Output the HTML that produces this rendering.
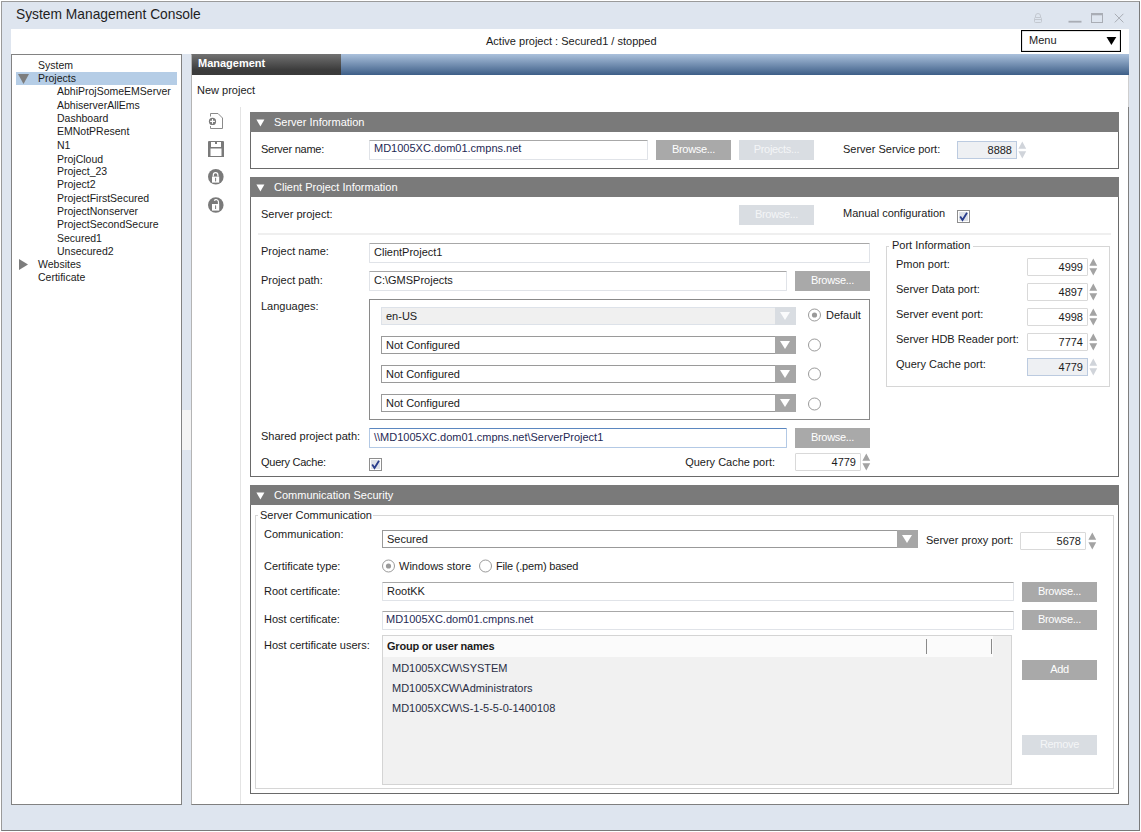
<!DOCTYPE html><html><head><meta charset="utf-8"><style>
html,body{margin:0;padding:0;}
body{width:1141px;height:832px;position:relative;overflow:hidden;background:#fff;font-family:"Liberation Sans", sans-serif;}
body div{position:absolute;box-sizing:border-box;}
.t{white-space:nowrap;line-height:1;}
svg{position:absolute;overflow:visible}
</style></head><body>
<div style="left:1px;top:1px;width:1139px;height:830px;background:#dee5ef;border:1px solid #7a7a7a;border-top-color:#9a9a9a;border-left-color:#9a9a9a;"></div>
<div class="t" style="left:16px;top:7px;font-size:14.6px;color:#1e1e1e;transform:scaleX(0.945);transform-origin:0 0;">System Management Console</div>
<svg style="left:0;top:0" width="1141" height="30">
<g fill="none" stroke="#c3c8d0" stroke-width="1">
<rect x="1034.5" y="17.5" width="7" height="5" rx="1"/>
<path d="M1035.5 17.5 v-1.5 a2.5 2.5 0 0 1 5 0 v1.5"/>
<path d="M1034.5 19.5 h7"/>
</g>
<rect x="1068.5" y="20.8" width="13" height="1.8" fill="#a9adb5"/>
<rect x="1091.5" y="13.5" width="11" height="9" fill="none" stroke="#a9adb5" stroke-width="1"/>
<rect x="1091" y="13" width="12" height="2.3" fill="#a9adb5"/>
<path d="M1114.8 13.8 L1123.4 22.4 M1123.4 13.8 L1114.8 22.4" stroke="#a9adb5" stroke-width="1"/>
</svg>
<div style="left:11px;top:29px;width:1118px;height:25px;background:#fff;"></div>
<div class="t" style="left:486px;top:35.69px;font-size:11px;color:#1b1b1b;font-weight:400;">Active project : Secured1 / stopped</div>
<div style="left:1021px;top:30px;width:100px;height:22px;background:#fff;border:1px solid #000;box-shadow:inset 0 0 0 0.2px #888;"></div>
<div class="t" style="left:1029px;top:34.69px;font-size:11px;color:#1b1b1b;font-weight:400;">Menu</div>
<svg style="left:0;top:0" width="1141" height="60"><path d="M1106.5 37 L1116.3 37 L1111.4 45 Z" fill="#000"/></svg>
<div style="left:11px;top:54px;width:171px;height:751px;background:#fff;border:1px solid #828282;"></div>
<div style="left:16px;top:72px;width:161px;height:13px;background:#b5cde6;"></div>
<div class="t" style="left:38px;top:60px;font-size:10.5px;color:#1b1b1b;">System</div>
<div class="t" style="left:38px;top:73px;font-size:10.5px;color:#1b1b1b;">Projects</div>
<div class="t" style="left:57px;top:86px;font-size:10.5px;color:#1b1b1b;">AbhiProjSomeEMServer</div>
<div class="t" style="left:57px;top:100px;font-size:10.5px;color:#1b1b1b;">AbhiserverAllEms</div>
<div class="t" style="left:57px;top:113px;font-size:10.5px;color:#1b1b1b;">Dashboard</div>
<div class="t" style="left:57px;top:126px;font-size:10.5px;color:#1b1b1b;">EMNotPResent</div>
<div class="t" style="left:57px;top:140px;font-size:10.5px;color:#1b1b1b;">N1</div>
<div class="t" style="left:57px;top:154px;font-size:10.5px;color:#1b1b1b;">ProjCloud</div>
<div class="t" style="left:57px;top:166px;font-size:10.5px;color:#1b1b1b;">Project_23</div>
<div class="t" style="left:57px;top:179px;font-size:10.5px;color:#1b1b1b;">Project2</div>
<div class="t" style="left:57px;top:193px;font-size:10.5px;color:#1b1b1b;">ProjectFirstSecured</div>
<div class="t" style="left:57px;top:206px;font-size:10.5px;color:#1b1b1b;">ProjectNonserver</div>
<div class="t" style="left:57px;top:219px;font-size:10.5px;color:#1b1b1b;">ProjectSecondSecure</div>
<div class="t" style="left:57px;top:233px;font-size:10.5px;color:#1b1b1b;">Secured1</div>
<div class="t" style="left:57px;top:246px;font-size:10.5px;color:#1b1b1b;">Unsecured2</div>
<div class="t" style="left:38px;top:259px;font-size:10.5px;color:#1b1b1b;">Websites</div>
<div class="t" style="left:38px;top:272px;font-size:10.5px;color:#1b1b1b;">Certificate</div>
<svg style="left:0;top:0" width="200" height="300"><path d="M18 74 L29 74 L23.5 84 Z" fill="#7d7d7d"/><path d="M19 259 L28 264.5 L19 270 Z" fill="#7d7d7d"/></svg>
<div style="left:182px;top:410px;width:9px;height:40px;background:#f3f3f3;"></div>
<div style="left:191px;top:54px;width:938px;height:751px;background:#fff;border:1px solid #7f7f7f;border-left-color:#b4b4b4;"></div>
<div style="left:192px;top:54px;width:149px;height:21px;background:linear-gradient(#727272,#3c3c3c 75%,#3a3a3a);"></div>
<div style="left:341px;top:54px;width:788px;height:21px;background:linear-gradient(#abc1dc,#3d5e87);"></div>
<div style="left:1128px;top:75px;width:1px;height:32px;background:#cfcfcf;"></div>
<div class="t" style="left:198px;top:57.69px;font-size:11px;color:#fff;font-weight:700;">Management</div>
<div class="t" style="left:197px;top:85.19px;font-size:11px;color:#1b1b1b;font-weight:400;">New project</div>
<div style="left:240px;top:107px;width:1px;height:697px;background:#e4e4e4;"></div>
<svg style="left:0;top:0" width="260" height="230">
<path d="M210.5 116.5 V113.5 H218 L222.5 118 V128.5 H210.5 V126" fill="none" stroke="#8a8a8a" stroke-width="1"/>
<circle cx="212.5" cy="121.4" r="3.6" fill="#7a7a7a"/>
<path d="M212.5 119 v4.8 M210.1 121.4 h4.8" stroke="#fff" stroke-width="1.1"/>
<path d="M208 142 Q208 141 209 141 H223 Q224 141 224 142 V157 H208 Z M211 142 V147 H221 V142 Z M210.5 148.5 V156 H221.5 V148.5 Z" fill="#7a7a7a" fill-rule="evenodd"/>
<rect x="215" y="142" width="2" height="2" fill="#7a7a7a"/>
<circle cx="215.8" cy="176.8" r="7.8" fill="#7a7a7a"/>
<rect x="212" y="176.6" width="7.2" height="6" fill="#fff"/>
<path d="M213.3 176.6 v-1.6 a2.3 2.3 0 0 1 4.6 0 v1.6" fill="none" stroke="#fff" stroke-width="1.2"/>
<rect x="215.1" y="177.8" width="1" height="3.6" fill="#7a7a7a"/>
<circle cx="215.8" cy="205" r="7.8" fill="#7a7a7a"/>
<rect x="212" y="204" width="7.2" height="6.6" fill="#fff"/>
<path d="M214.2 200.6 a2.4 2.4 0 0 1 4.3 1.6 v1.8" fill="none" stroke="#fff" stroke-width="1.2"/>
<rect x="215.1" y="205.4" width="1" height="3.6" fill="#7a7a7a"/>
</svg>
<div style="left:250px;top:112px;width:869px;height:57px;background:#fff;border:1px solid #6a6a6a;"></div>
<div style="left:250px;top:112px;width:869px;height:20px;background:#7a7a7a;"></div>
<svg style="left:0;top:0" width="300" height="832"><path d="M256.4 119.4 L264.4 119.4 L260.4 126.4 Z" fill="#fff"/></svg>
<div class="t" style="left:274px;top:116.69px;font-size:11px;color:#fff;font-weight:400;">Server Information</div>
<div class="t" style="left:261px;top:143.69px;font-size:11px;color:#1b1b1b;font-weight:400;letter-spacing:-0.25px;">Server name:</div>
<div style="left:369px;top:140px;width:279px;height:20px;background:#fff;border:1px solid #e0e3e8;border-top-color:#a8a8a8;border-radius:1px;"></div>
<div class="t" style="left:374px;top:142.69px;font-size:11px;color:#1f2a55;font-weight:400;">MD1005XC.dom01.cmpns.net</div>
<div style="left:656px;top:140px;width:75px;height:20px;background:#a9a9a9;"></div>
<div class="t" style="left:656px;top:140px;width:75px;height:20px;line-height:19px;text-align:center;font-size:11px;color:#fff;letter-spacing:-0.3px;">Browse...</div>
<div style="left:739px;top:140px;width:75px;height:20px;background:#d9dde2;"></div>
<div class="t" style="left:739px;top:140px;width:75px;height:20px;line-height:19px;text-align:center;font-size:11px;color:#f4f5f7;letter-spacing:-0.3px;">Projects...</div>
<div class="t" style="left:843px;top:143.69px;font-size:11px;color:#1b1b1b;font-weight:400;">Server Service port:</div>
<div style="left:957px;top:141px;width:60px;height:18px;background:#eef0f3;border:1px solid #bccbe0;"></div>
<div class="t" style="right:129px;top:144.69px;font-size:11px;color:#1b1b1b;font-weight:400;">8888</div>
<svg style="left:0;top:0" width="1141" height="832"><path d="M1018.4 148.8 L1026.2 148.8 L1022.3 141.5 Z M1018.4 151.2 L1026.2 151.2 L1022.3 158.5 Z" fill="#d0d4da"/></svg>
<div style="left:250px;top:177px;width:869px;height:300px;background:#fff;border:1px solid #6a6a6a;"></div>
<div style="left:250px;top:177px;width:869px;height:20px;background:#7a7a7a;"></div>
<svg style="left:0;top:0" width="300" height="832"><path d="M256.4 184.4 L264.4 184.4 L260.4 191.4 Z" fill="#fff"/></svg>
<div class="t" style="left:274px;top:181.69px;font-size:11px;color:#fff;font-weight:400;">Client Project Information</div>
<div class="t" style="left:261px;top:208.69px;font-size:11px;color:#1b1b1b;font-weight:400;">Server project:</div>
<div style="left:739px;top:205px;width:75px;height:20px;background:#d9dde2;"></div>
<div class="t" style="left:739px;top:205px;width:75px;height:20px;line-height:19px;text-align:center;font-size:11px;color:#f4f5f7;letter-spacing:-0.3px;">Browse...</div>
<div class="t" style="left:843px;top:207.69px;font-size:11px;color:#1b1b1b;font-weight:400;">Manual configuration</div>
<svg style="left:957px;top:210px" width="13" height="13">
<rect x="0.5" y="0.5" width="12" height="12" fill="#fff" stroke="#8e8e8e"/>
<rect x="2" y="2" width="9" height="9" fill="#dde1e8"/>
<path d="M3.2 6.5 L5.5 10 L10 2.8" fill="none" stroke="#283c8c" stroke-width="1.8"/>
</svg>
<div style="left:258px;top:233px;width:853px;height:2px;background:#efefef;"></div>
<div class="t" style="left:261px;top:245.69px;font-size:11px;color:#1b1b1b;font-weight:400;">Project name:</div>
<div style="left:369px;top:243px;width:501px;height:20px;background:#fff;border:1px solid #e0e3e8;border-top-color:#a8a8a8;border-radius:1px;"></div>
<div class="t" style="left:374px;top:246.69px;font-size:11px;color:#1b1b1b;font-weight:400;">ClientProject1</div>
<div class="t" style="left:261px;top:274.69px;font-size:11px;color:#1b1b1b;font-weight:400;">Project path:</div>
<div style="left:369px;top:271px;width:418px;height:20px;background:#fff;border:1px solid #e0e3e8;border-top-color:#a8a8a8;border-radius:1px;"></div>
<div class="t" style="left:374px;top:274.69px;font-size:11px;color:#1b1b1b;font-weight:400;">C:\GMSProjects</div>
<div style="left:795px;top:271px;width:75px;height:20px;background:#a9a9a9;"></div>
<div class="t" style="left:795px;top:271px;width:75px;height:20px;line-height:19px;text-align:center;font-size:11px;color:#fff;letter-spacing:-0.3px;">Browse...</div>
<div class="t" style="left:261px;top:301.19px;font-size:11px;color:#1b1b1b;font-weight:400;">Languages:</div>
<div style="left:369px;top:299px;width:501px;height:121px;border:1px solid #8a8a8a;"></div>
<div style="left:381px;top:307px;width:415px;height:18px;background:#f0f0f0;border:1px solid #dde2e9;"></div>
<div style="left:775px;top:307px;width:21px;height:18px;background:#d9dde2;"></div>
<svg style="left:0;top:0" width="1141" height="832"><path d="M780 312.0 L790 312.0 L785 320.0 Z" fill="#fafbfc"/></svg>
<div class="t" style="left:386px;top:310.69px;font-size:11px;color:#1b1b1b;font-weight:400;">en-US</div>
<div style="left:381px;top:336px;width:415px;height:18px;background:#fff;border:1px solid #9a9a9a;"></div>
<div style="left:775px;top:336px;width:21px;height:18px;background:#a6a6a6;"></div>
<svg style="left:0;top:0" width="1141" height="832"><path d="M780 341.0 L790 341.0 L785 349.0 Z" fill="#fff"/></svg>
<div class="t" style="left:386px;top:339.69px;font-size:11px;color:#1b1b1b;font-weight:400;">Not Configured</div>
<div style="left:381px;top:365px;width:415px;height:18px;background:#fff;border:1px solid #9a9a9a;"></div>
<div style="left:775px;top:365px;width:21px;height:18px;background:#a6a6a6;"></div>
<svg style="left:0;top:0" width="1141" height="832"><path d="M780 370.0 L790 370.0 L785 378.0 Z" fill="#fff"/></svg>
<div class="t" style="left:386px;top:368.69px;font-size:11px;color:#1b1b1b;font-weight:400;">Not Configured</div>
<div style="left:381px;top:394px;width:415px;height:18px;background:#fff;border:1px solid #9a9a9a;"></div>
<div style="left:775px;top:394px;width:21px;height:18px;background:#a6a6a6;"></div>
<svg style="left:0;top:0" width="1141" height="832"><path d="M780 399.0 L790 399.0 L785 407.0 Z" fill="#fff"/></svg>
<div class="t" style="left:386px;top:397.69px;font-size:11px;color:#1b1b1b;font-weight:400;">Not Configured</div>
<svg style="left:808px;top:308px" width="14" height="14">
<circle cx="6.5" cy="7" r="6" fill="#fff" stroke="#9a9a9a"/>
<circle cx="6.5" cy="7" r="2.6" fill="#9a9a9a"/>
</svg>
<svg style="left:808px;top:338px" width="14" height="14">
<circle cx="6.5" cy="7" r="6" fill="#fff" stroke="#9a9a9a"/>

</svg>
<svg style="left:808px;top:367px" width="14" height="14">
<circle cx="6.5" cy="7" r="6" fill="#fff" stroke="#9a9a9a"/>

</svg>
<svg style="left:808px;top:397px" width="14" height="14">
<circle cx="6.5" cy="7" r="6" fill="#fff" stroke="#9a9a9a"/>

</svg>
<div class="t" style="left:826px;top:309.69px;font-size:11px;color:#1b1b1b;font-weight:400;">Default</div>
<div style="left:886px;top:246px;width:224px;height:141px;border:1px solid #d6d6d6;"></div>
<div style="left:889px;top:240px;width:84px;height:11px;background:#fff;"></div>
<div class="t" style="left:892px;top:239.69px;font-size:11px;color:#1b1b1b;font-weight:400;">Port Information</div>
<div class="t" style="left:896px;top:258.69px;font-size:11px;color:#1b1b1b;font-weight:400;">Pmon port:</div>
<div style="left:1027px;top:258px;width:61px;height:18px;background:#fff;border:1px solid #d9d9d9;border-radius:1px;"></div>
<div class="t" style="right:58px;top:261.69px;font-size:11px;color:#1b1b1b;font-weight:400;">4999</div>
<svg style="left:0;top:0" width="1141" height="832"><path d="M1089.4 265.8 L1097.2 265.8 L1093.3 258.5 Z M1089.4 268.2 L1097.2 268.2 L1093.3 275.5 Z" fill="#a3a3a3"/></svg>
<div class="t" style="left:896px;top:283.69px;font-size:11px;color:#1b1b1b;font-weight:400;">Server Data port:</div>
<div style="left:1027px;top:283px;width:61px;height:18px;background:#fff;border:1px solid #d9d9d9;border-radius:1px;"></div>
<div class="t" style="right:58px;top:286.69px;font-size:11px;color:#1b1b1b;font-weight:400;">4897</div>
<svg style="left:0;top:0" width="1141" height="832"><path d="M1089.4 290.8 L1097.2 290.8 L1093.3 283.5 Z M1089.4 293.2 L1097.2 293.2 L1093.3 300.5 Z" fill="#a3a3a3"/></svg>
<div class="t" style="left:896px;top:308.69px;font-size:11px;color:#1b1b1b;font-weight:400;">Server event port:</div>
<div style="left:1027px;top:308px;width:61px;height:18px;background:#fff;border:1px solid #d9d9d9;border-radius:1px;"></div>
<div class="t" style="right:58px;top:311.69px;font-size:11px;color:#1b1b1b;font-weight:400;">4998</div>
<svg style="left:0;top:0" width="1141" height="832"><path d="M1089.4 315.8 L1097.2 315.8 L1093.3 308.5 Z M1089.4 318.2 L1097.2 318.2 L1093.3 325.5 Z" fill="#a3a3a3"/></svg>
<div class="t" style="left:896px;top:333.69px;font-size:11px;color:#1b1b1b;font-weight:400;">Server HDB Reader port:</div>
<div style="left:1027px;top:333px;width:61px;height:18px;background:#fff;border:1px solid #d9d9d9;border-radius:1px;"></div>
<div class="t" style="right:58px;top:336.69px;font-size:11px;color:#1b1b1b;font-weight:400;">7774</div>
<svg style="left:0;top:0" width="1141" height="832"><path d="M1089.4 340.8 L1097.2 340.8 L1093.3 333.5 Z M1089.4 343.2 L1097.2 343.2 L1093.3 350.5 Z" fill="#a3a3a3"/></svg>
<div class="t" style="left:896px;top:358.69px;font-size:11px;color:#1b1b1b;font-weight:400;">Query Cache port:</div>
<div style="left:1027px;top:358px;width:61px;height:18px;background:#eef0f3;border:1px solid #bccbe0;"></div>
<div class="t" style="right:58px;top:361.69px;font-size:11px;color:#1b1b1b;font-weight:400;">4779</div>
<svg style="left:0;top:0" width="1141" height="832"><path d="M1089.4 365.8 L1097.2 365.8 L1093.3 358.5 Z M1089.4 368.2 L1097.2 368.2 L1093.3 375.5 Z" fill="#d0d4da"/></svg>
<div class="t" style="left:261px;top:431.19px;font-size:11px;color:#1b1b1b;font-weight:400;">Shared project path:</div>
<div style="left:369px;top:428px;width:418px;height:20px;background:#fff;border:1px solid #e0e3e8;border-top-color:#a8a8a8;border-radius:1px;border-color:#b3c9e5;border-top-color:#5b87c0;"></div>
<div class="t" style="left:374px;top:431.69px;font-size:11px;color:#1f2a55;font-weight:400;">\\MD1005XC.dom01.cmpns.net\ServerProject1</div>
<div style="left:795px;top:428px;width:75px;height:20px;background:#a9a9a9;"></div>
<div class="t" style="left:795px;top:428px;width:75px;height:20px;line-height:19px;text-align:center;font-size:11px;color:#fff;letter-spacing:-0.3px;">Browse...</div>
<div class="t" style="left:261px;top:456.69px;font-size:11px;color:#1b1b1b;font-weight:400;letter-spacing:-0.25px;">Query Cache:</div>
<svg style="left:369px;top:458px" width="13" height="13">
<rect x="0.5" y="0.5" width="12" height="12" fill="#fff" stroke="#8e8e8e"/>
<rect x="2" y="2" width="9" height="9" fill="#dde1e8"/>
<path d="M3.2 6.5 L5.5 10 L10 2.8" fill="none" stroke="#283c8c" stroke-width="1.8"/>
</svg>
<div class="t" style="right:366px;top:456.69px;font-size:11px;color:#1b1b1b;font-weight:400;">Query Cache port:</div>
<div style="left:795px;top:453px;width:66px;height:18px;background:#fff;border:1px solid #d9d9d9;border-radius:1px;"></div>
<div class="t" style="right:285px;top:456.69px;font-size:11px;color:#1b1b1b;font-weight:400;">4779</div>
<svg style="left:0;top:0" width="1141" height="832"><path d="M862.4 460.8 L870.2 460.8 L866.3 453.5 Z M862.4 463.2 L870.2 463.2 L866.3 470.5 Z" fill="#a3a3a3"/></svg>
<div style="left:250px;top:485px;width:869px;height:309px;background:#fff;border:1px solid #6a6a6a;"></div>
<div style="left:250px;top:485px;width:869px;height:20px;background:#7a7a7a;"></div>
<svg style="left:0;top:0" width="300" height="832"><path d="M256.4 492.4 L264.4 492.4 L260.4 499.4 Z" fill="#fff"/></svg>
<div class="t" style="left:274px;top:489.69px;font-size:11px;color:#fff;font-weight:400;">Communication Security</div>
<div style="left:255px;top:515px;width:859px;height:274px;border:1px solid #d6d6d6;"></div>
<div style="left:258px;top:508px;width:115px;height:13px;background:#fff;"></div>
<div class="t" style="left:260px;top:510.19px;font-size:11px;color:#1b1b1b;font-weight:400;">Server Communication</div>
<div class="t" style="left:264px;top:528.69px;font-size:11px;color:#1b1b1b;font-weight:400;">Communication:</div>
<div style="left:382px;top:530px;width:536px;height:18px;background:#fff;border:1px solid #999;"></div>
<div style="left:897px;top:530px;width:21px;height:18px;background:#a6a6a6;"></div>
<svg style="left:0;top:0" width="1141" height="832"><path d="M902 535.0 L912 535.0 L907 543.0 Z" fill="#fff"/></svg>
<div class="t" style="left:387px;top:533.69px;font-size:11px;color:#1b1b1b;font-weight:400;">Secured</div>
<div class="t" style="left:926px;top:534.69px;font-size:11px;color:#1b1b1b;font-weight:400;">Server proxy port:</div>
<div style="left:1020px;top:532px;width:66px;height:18px;background:#fff;border:1px solid #d9d9d9;border-radius:1px;"></div>
<div class="t" style="right:60px;top:535.69px;font-size:11px;color:#1b1b1b;font-weight:400;">5678</div>
<svg style="left:0;top:0" width="1141" height="832"><path d="M1088.4 539.8 L1096.2 539.8 L1092.3 532.5 Z M1088.4 542.2 L1096.2 542.2 L1092.3 549.5 Z" fill="#a3a3a3"/></svg>
<div class="t" style="left:264px;top:560.69px;font-size:11px;color:#1b1b1b;font-weight:400;">Certificate type:</div>
<svg style="left:382px;top:559px" width="14" height="14">
<circle cx="6.5" cy="7" r="6" fill="#fff" stroke="#9a9a9a"/>
<circle cx="6.5" cy="7" r="2.6" fill="#9a9a9a"/>
</svg>
<div class="t" style="left:399px;top:560.69px;font-size:11px;color:#1b1b1b;font-weight:400;">Windows store</div>
<svg style="left:479px;top:559px" width="14" height="14">
<circle cx="6.5" cy="7" r="6" fill="#fff" stroke="#9a9a9a"/>

</svg>
<div class="t" style="left:496px;top:560.69px;font-size:11px;color:#1b1b1b;font-weight:400;letter-spacing:-0.2px;">File (.pem) based</div>
<div class="t" style="left:264px;top:585.69px;font-size:11px;color:#1b1b1b;font-weight:400;">Root certificate:</div>
<div style="left:382px;top:582px;width:632px;height:19px;background:#fff;border:1px solid #e0e3e8;border-top-color:#a8a8a8;border-radius:1px;"></div>
<div class="t" style="left:387px;top:585.69px;font-size:11px;color:#1b1b1b;font-weight:400;">RootKK</div>
<div style="left:1022px;top:582px;width:75px;height:20px;background:#a9a9a9;"></div>
<div class="t" style="left:1022px;top:582px;width:75px;height:20px;line-height:19px;text-align:center;font-size:11px;color:#fff;letter-spacing:-0.3px;">Browse...</div>
<div class="t" style="left:264px;top:613.69px;font-size:11px;color:#1b1b1b;font-weight:400;">Host certificate:</div>
<div style="left:382px;top:611px;width:632px;height:19px;background:#fff;border:1px solid #e0e3e8;border-top-color:#a8a8a8;border-radius:1px;"></div>
<div class="t" style="left:386px;top:613.69px;font-size:11px;color:#1f2a55;font-weight:400;">MD1005XC.dom01.cmpns.net</div>
<div style="left:1022px;top:610px;width:75px;height:20px;background:#a9a9a9;"></div>
<div class="t" style="left:1022px;top:610px;width:75px;height:20px;line-height:19px;text-align:center;font-size:11px;color:#fff;letter-spacing:-0.3px;">Browse...</div>
<div class="t" style="left:264px;top:639.69px;font-size:11px;color:#1b1b1b;font-weight:400;">Host certificate users:</div>
<div style="left:382px;top:635px;width:630px;height:150px;background:#f1f1f1;border:1px solid #d4d4d4;"></div>
<div style="left:383px;top:636px;width:610px;height:21px;background:#fbfbfb;"></div>
<div style="left:926px;top:639px;width:1px;height:15px;background:#8a8a8a;"></div>
<div style="left:991px;top:639px;width:1px;height:15px;background:#8a8a8a;"></div>
<div class="t" style="left:387px;top:640.69px;font-size:11px;color:#1b1b1b;font-weight:700;letter-spacing:-0.2px;">Group or user names</div>
<div class="t" style="left:392px;top:662.69px;font-size:11px;color:#2a2f45;font-weight:400;">MD1005XCW\SYSTEM</div>
<div class="t" style="left:392px;top:682.69px;font-size:11px;color:#2a2f45;font-weight:400;">MD1005XCW\Administrators</div>
<div class="t" style="left:392px;top:703.19px;font-size:11px;color:#2a2f45;font-weight:400;">MD1005XCW\S-1-5-5-0-1400108</div>
<div style="left:1022px;top:660px;width:75px;height:20px;background:#a9a9a9;"></div>
<div class="t" style="left:1022px;top:660px;width:75px;height:20px;line-height:19px;text-align:center;font-size:11px;color:#fff;letter-spacing:-0.3px;">Add</div>
<div style="left:1022px;top:735px;width:75px;height:20px;background:#d9dde2;"></div>
<div class="t" style="left:1022px;top:735px;width:75px;height:20px;line-height:19px;text-align:center;font-size:11px;color:#f4f5f7;letter-spacing:-0.3px;">Remove</div>
</body></html>
